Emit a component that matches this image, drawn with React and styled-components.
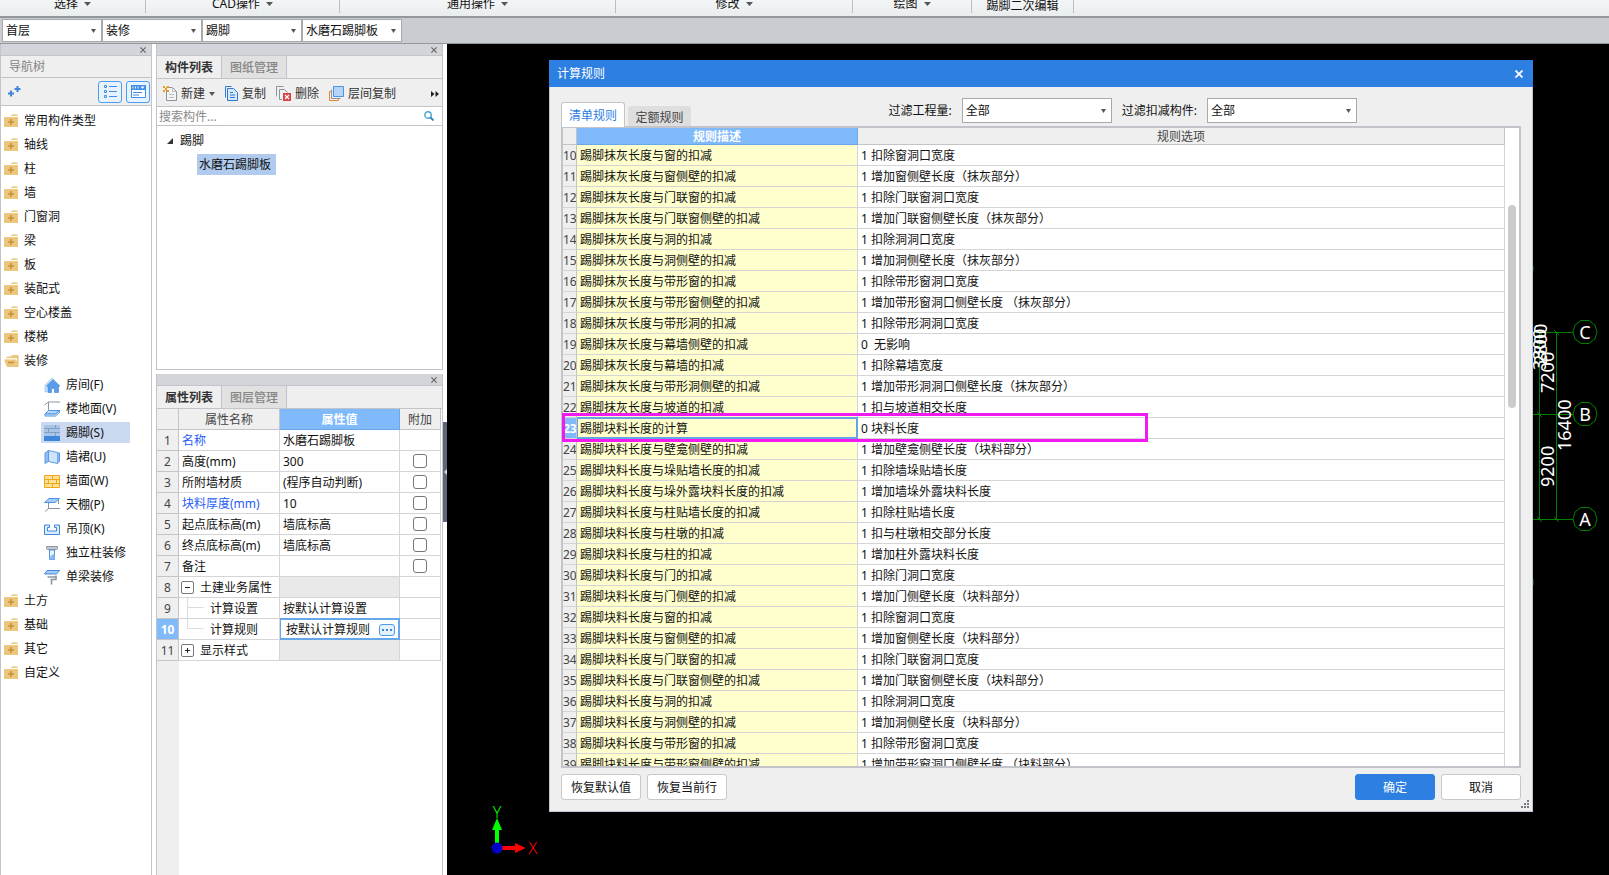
import React from "react";
import styled, { createGlobalStyle, css } from "styled-components";

const GlobalStyle = createGlobalStyle`
  *, *::before, *::after { box-sizing: border-box; }
  html, body, #root { height: 100%; }
  body {
    margin: 0;
    overflow: hidden;
    background: #fff;
    color: #111;
    font: 12px/20px "Noto Sans", "Noto Sans CJK SC", sans-serif;
  }
  button, input, select { font: inherit; color: inherit; margin: 0; }
  button { padding: 0; border: 0; background: none; white-space: nowrap; }
  svg { display: block; flex: none; }
  ul { list-style: none; margin: 0; padding: 0; }
`;

const line = "#c3c4c9";
const cellLine = "#d5d5d5";

const Shell = styled.div`
  height: 100vh;
  display: flex;
  flex-direction: column;
`;

/* ---------- ribbon ---------- */

const Ribbon = styled.nav`
  display: flex;
  flex: none;
  height: 18px;
  overflow: hidden;
  background: linear-gradient(#f3f6f7, #e9edee);
  border-bottom: 2px solid #93979c;
`;

const RibbonGroup = styled.div`
  display: flex;
  justify-content: center;
  align-items: flex-end;
  width: ${(p) => p.$width}px;
  height: 13px;
  padding-bottom: ${(p) => (p.$low ? 1 : 3)}px;
  border-right: 1px solid #bcbfc2;
`;

const RibbonButton = styled.button`
  display: flex;
  align-items: center;
  gap: 6px;
  height: 12px;
  line-height: 12px;
`;

/* ---------- combo boxes ---------- */

const ComboBar = styled.div`
  display: flex;
  flex: none;
  height: 26px;
  padding: 1px 2px;
  background: #c9ccd1;
  border-bottom: 1px solid #94979c;
`;

const ComboBox = styled.span`
  position: relative;
  display: inline-block;
  width: ${(p) => p.$width}px;
  height: ${(p) => p.$height}px;

  select {
    appearance: none;
    display: block;
    width: 100%;
    height: 100%;
    padding: 0 20px 0 3px;
    border: 1px solid #a9a9a9;
    border-radius: 0;
    background: #fff;
  }
  svg {
    position: absolute;
    right: 6px;
    top: 50%;
    margin-top: -2px;
    pointer-events: none;
  }
`;

/* ---------- docked panels ---------- */

const Workspace = styled.div`
  display: flex;
  flex: 1;
  min-height: 0;
`;

const NavPanel = styled.aside`
  display: flex;
  flex-direction: column;
  flex: none;
  width: 152px;
  border: solid ${line};
  border-width: 0 1px;
  background: #fff;
`;

const MiddleColumn = styled.div`
  display: flex;
  flex-direction: column;
  flex: none;
  gap: 4px;
  width: 287px;
  margin-left: 4px;
`;

const DockPanel = styled.section`
  display: flex;
  flex-direction: column;
  flex: ${(p) => (p.$fill ? "1" : "none")};
  min-height: 0;
  border: solid ${line};
  border-width: ${(p) => (p.$fill ? "0 1px" : "0 1px 1px")};
`;

const DockBar = styled.div`
  display: flex;
  justify-content: flex-end;
  align-items: center;
  flex: none;
  height: 12px;
  padding-right: 5px;
  background: #d4d5da;
  border-bottom: 1px solid ${line};
`;

const NavTitle = styled.h2`
  flex: none;
  height: 22px;
  margin: 0;
  padding-left: 8px;
  background: #efefef;
  border-bottom: 1px solid ${line};
  color: #848484;
  font-size: 12px;
  line-height: 21px;
  font-weight: 400;
`;

const NavTools = styled.div`
  display: flex;
  align-items: center;
  gap: 4px;
  flex: none;
  height: 28px;
  padding: 0 1px 0 7px;
  background: #efefef;
  border-bottom: 1px solid ${line};
`;

const AddButton = styled.button`
  margin-right: auto;
`;

const ViewToggle = styled.button`
  display: grid;
  place-items: center;
  width: 24px;
  height: 22px;
  border: 1px solid #4a9ff5;
  border-radius: 3px;
  background: #e8f3fe;
`;

const NavList = styled.ul`
  padding-top: 3px;
`;

const NavRow = styled.button`
  display: flex;
  align-items: center;
  gap: 5px;
  width: 100%;
  height: 24px;
  padding-left: 3px;
`;

const ChildRow = styled.li`
  padding: 1px 0 2px 40px;
`;

const ChildButton = styled.button`
  display: flex;
  align-items: center;
  gap: 6px;
  width: 89px;
  height: 21px;
  padding-left: 3px;
  background: ${(p) => (p.$active ? "#cad9f0" : "none")};
`;

const TabStrip = styled.div`
  display: flex;
  flex: none;
  height: 23px;
  background: #efefef;
  border-bottom: 1px solid ${line};
`;

const DockTab = styled.button`
  width: 65px;
  padding-top: 2px;
  border: solid ${line};
  border-width: 0 1px 0 0;
  background: ${(p) => (p.$active ? "#efefef" : "#e1e1e1")};
  color: ${(p) => (p.$active ? "#333" : "#868686")};
  font-weight: ${(p) => (p.$active ? 700 : 500)};
`;

const ListTools = styled.div`
  display: flex;
  align-items: center;
  flex: none;
  gap: 10px;
  height: 28px;
  padding: 2px 3px 0 6px;
  background: #efefef;
  border-bottom: 1px solid ${line};
`;

const ToolButton = styled.button`
  display: flex;
  align-items: center;
  gap: 4px;
  color: #333;
`;

const MoreButton = styled.button`
  margin-left: auto;
`;

const SearchBox = styled.label`
  display: flex;
  align-items: center;
  flex: none;
  height: 19px;
  padding: 0 8px 0 2px;
  border-bottom: 1px solid ${line};

  input {
    flex: 1;
    min-width: 0;
    height: 18px;
    padding: 2px 0 0;
    border: 0;
    outline: 0;
    background: none;
  }
  input::placeholder { color: #8a8a8a; opacity: 1; }
`;

const ComponentTree = styled.ul`
  height: 243px;
  padding-top: 5px;
`;

const TreeRoot = styled.button`
  display: flex;
  align-items: center;
  gap: 7px;
  height: 20px;
  padding-left: 10px;
`;

const TreeLeaf = styled.button`
  height: 21px;
  margin: 3px 0 0 40px;
  padding: 0 5px 0 2px;
  background: #b0cbee;
`;

/* ---------- property table ---------- */

const PropTable = styled.table`
  flex: none;
  width: 284px;
  table-layout: fixed;
  border-collapse: separate;
  border-spacing: 0;

  th, td {
    height: 21px;
    padding: 2px 0 0;
    border: solid ${cellLine};
    border-width: 0 1px 1px 0;
    text-align: left;
    font-weight: 400;
    line-height: 18px;
    white-space: nowrap;
  }
  thead th {
    background: #efefef;
    border-color: ${line};
    color: #444;
    text-align: center;
  }
  thead th.current {
    background: #80bafb;
    border-color: #6aa8ea;
    color: #fff;
    font-weight: 700;
  }
`;

const PropNumber = styled.th`
  && {
    background: ${(p) => (p.$active ? "#80bafb" : "#efefef")};
    border-color: ${line};
    color: ${(p) => (p.$active ? "#fff" : "#444")};
    font-weight: ${(p) => (p.$active ? 700 : 400)};
    text-align: center;
  }
`;

const NameCell = styled.td`
  && { padding: 0; }
`;

const PropName = styled.div`
  display: flex;
  align-items: center;
  height: 20px;
  padding-left: 3px;
  color: ${(p) => (p.$accent ? "#1f5cf5" : "#111")};
`;

const NameText = styled.span`
  padding-top: 2px;
`;

const Expander = styled.button`
  display: grid;
  place-items: center;
  width: 13px;
  height: 13px;
  margin: 0 6px 0 -1px;
  border: 1px solid #777;
  border-radius: 2px;
  background: #fff;
`;

const PropValue = styled.td`
  && {
    padding-left: 3px;
    background: ${(p) => (p.$blank ? "#e9e9e9" : "#fff")};
    ${(p) => p.$active && css`
      padding: 2px 4px 0 6px;
      border-color: #66a6ea;
      box-shadow: inset 1px 1px #66a6ea, inset -1px -1px #66a6ea, 0 -1px #66a6ea;
    `}
  }
`;

const ValueEditor = styled.div`
  display: flex;
  align-items: center;
  justify-content: space-between;
`;

const EllipsisButton = styled.button`
  display: grid;
  place-items: center;
  width: 16px;
  height: 12px;
  border: 1px solid #4f9ae8;
  border-radius: 3px;
  background: #e3f0fd;
`;

const TickCell = styled.td`
  && { padding: 0; }
`;

const Tick = styled.input`
  appearance: none;
  display: block;
  width: 14px;
  height: 14px;
  margin: 0 auto;
  border: 1px solid #777;
  border-radius: 3px;
  background: #fff;
`;

const NumberGutter = styled.div`
  flex: 1;
  width: 22px;
  background: #efefef;
`;

const Splitter = styled.div`
  flex: none;
  width: 4px;
  padding-top: 378px;
`;

const CollapseHandle = styled.button`
  display: grid;
  place-items: center;
  width: 4px;
  height: 100px;
  background: #5d6878;
`;

/* ---------- drawing canvas ---------- */

const Canvas = styled.main`
  position: relative;
  flex: 1;
  min-width: 0;
  overflow: hidden;
  background: #000;
`;

const GridAxes = styled.svg`
  position: absolute;
  top: 0;
  right: 0;
`;

const OriginMark = styled.svg`
  position: absolute;
  left: 34px;
  bottom: 17px;
`;

/* ---------- dialog ---------- */

const Dialog = styled.section`
  position: absolute;
  inset: 16px 76px 63px 102px;
  display: flex;
  flex-direction: column;
  background: #efefef;
`;

const DialogTitle = styled.header`
  display: flex;
  align-items: center;
  justify-content: space-between;
  flex: none;
  height: 27px;
  padding: 0 10px 0 8px;
  background: #2d80e2;
  color: #fff;

  h1 { margin: 0; font-size: 12px; font-weight: 400; }
`;

const DialogBody = styled.div`
  display: flex;
  flex-direction: column;
  flex: 1;
  min-height: 0;
  padding: 0 11px 11px;
  border: solid #bfc6d4;
  border-width: 0 1px 1px;
`;

const DialogHead = styled.div`
  display: flex;
  align-items: flex-end;
  flex: none;
  gap: 3px;
  height: 39px;
`;

const RuleTab = styled.button`
  position: relative;
  z-index: 1;
  width: ${(p) => (p.$active ? 64 : 63)}px;
  padding-top: 2px;
  border-radius: 3px 3px 0 0;
  ${(p) => p.$active
    ? css`
        height: 25px;
        margin-bottom: -1px;
        border: 1px solid ${line};
        border-bottom: 0;
        background: #fff;
        color: #2d80e2;
      `
    : css`
        height: 20px;
        background: #dedede;
        color: #444;
      `}
`;

const Filters = styled.div`
  display: flex;
  gap: 10px;
  margin: 0 164px 3px auto;

  label { display: flex; align-items: center; gap: 10px; }
`;

const GridFrame = styled.div`
  position: relative;
  display: flex;
  flex: 1;
  min-height: 0;
  border: 2px solid ${line};
  background: #fff;
`;

const GridView = styled.div`
  flex: 1;
  overflow: hidden;
`;

const ScrollTrack = styled.div`
  flex: none;
  width: 14px;
  padding: 77px 3px 0;
`;

const ScrollThumb = styled.div`
  height: 203px;
  border-radius: 4px;
  background: #cbcbcb;
`;

const RuleTable = styled.table`
  width: 100%;
  table-layout: fixed;
  border-collapse: separate;
  border-spacing: 0;

  th, td {
    height: 21px;
    padding: 2px 0 0 3px;
    border: solid ${cellLine};
    border-width: 0 1px 1px 0;
    text-align: left;
    font-weight: 400;
    line-height: 18px;
    white-space: pre;
  }
  thead th {
    height: 17px;
    padding: 2px 0 0;
    line-height: 14px;
    background: #efefef;
    border-color: ${line};
    color: #444;
    text-align: center;
  }
  thead th.current {
    background: #80bafb;
    border-color: #6aa8ea;
    color: #fff;
    font-weight: 700;
  }
`;

const RuleNumber = styled.th`
  && {
    padding: 2px 0 0;
    overflow: hidden;
    background: ${(p) => (p.$active ? "#80bafb" : "#efefef")};
    border-right-color: ${line};
    color: ${(p) => (p.$active ? "#fff" : "#444")};
    font-weight: ${(p) => (p.$active ? 700 : 400)};
  }
`;

const RuleName = styled.td`
  && {
    background: #ffffcd;
    ${(p) => p.$active && css`
      border-color: #66a4e4;
      box-shadow: inset 1px 1px #66a4e4, inset -1px -1px #66a4e4, 0 -1px #66a4e4;
    `}
  }
`;

const Highlight = styled.div`
  position: absolute;
  left: -1px;
  top: 285px;
  width: 586px;
  height: 29px;
  border: 3px solid #f21af0;
  pointer-events: none;
`;

const DialogFooter = styled.footer`
  display: flex;
  flex: none;
  gap: 6px;
  padding-top: 6px;
`;

const DialogButton = styled.button`
  width: 80px;
  height: 26px;
  padding-top: 2px;
  margin-left: ${(p) => (p.$pushed ? "auto" : "0")};
  border: 1px solid ${(p) => (p.$primary ? "#2d80e2" : "#c8c8c8")};
  border-radius: 3px;
  background: ${(p) => (p.$primary ? "#2d80e2" : "#fff")};
  color: ${(p) => (p.$primary ? "#fff" : "#111")};
`;

const Grip = styled.svg`
  position: absolute;
  right: 4px;
  bottom: 4px;
`;

/* ---------- icons ---------- */

const Caret = ({ size = 7, color = "#555" }) => (
  <svg width={size} height="4" viewBox="0 0 8 4" preserveAspectRatio="none" fill={color}><path d="M0 0h8L4 4z" /></svg>
);

const Cross = ({ size = 6, color = "#666", weight = 1.5 }) => (
  <svg width={size} height={size} viewBox="0 0 8 8" stroke={color} strokeWidth={weight}><path d="M.5.5l7 7M7.500.5l-7 7" /></svg>
);

const Folder = () => (
  <svg width="15" height="14" viewBox="0 0 15 14">
    <path d="M7 1.500l1-1h5l1 1.500H7zM0 3h14v9.500q0 .5-.5.5H.5q-.5 0-.5-.5z" fill="#ecc67c" />
    <path d="M7 5v6M4 8h6" stroke="#c4933a" strokeWidth="1.600" />
  </svg>
);

const FolderOpen = () => (
  <svg width="15" height="14" viewBox="0 0 15 14">
    <path d="M2 3.500L8 1.500h6.500V13H3z" fill="#f6e3b8" />
    <path d="M2 3l5-.5 1.500-1.500H14.500V13H12z" fill="#ecc67c" />
    <path d="M2.500 4H13v3H3z" fill="#fdf5e2" />
    <path d="M0 5.500h12L14 13H3z" fill="#ecc67c" />
    <path d="M4 8.500h6" stroke="#c4933a" strokeWidth="1.600" />
  </svg>
);

const childIcons = {
  room: (
    <g>
      <path d="M1 8l7-7 2 2-7 7v5H1z" fill="#cfe4fb" stroke="#8dbdf0" strokeWidth=".6" />
      <path d="M9 2.500l7 6.500h-1.500v6.500h-4v-4h-3v4H4V9H2.500z" fill="#5b9ceb" stroke="#3c82dc" strokeWidth=".6" />
    </g>
  ),
  floor: (
    <g fill="none">
      <path d="M4.500 9V1L.5 4M4.500 1H16" stroke="#8a95a3" />
      <path d="M4.500 9.500H15.500l-4 3.500H1z" fill="#b9d7f8" stroke="#4d93e0" />
      <path d="M1 13v2h10.500l4-3.500v-2L11.500 13z" fill="#dcebfc" stroke="#4d93e0" />
    </g>
  ),
  skirting: (
    <g>
      <path d="M0 0h16v11H0z" fill="#a9c4e4" />
      <path d="M0 3.500h16M0 7.500h16M4.500 3.500v4M11.500 0v3.500M11.500 7.500V11" stroke="#7f9fc4" />
      <path d="M0 11h16v5H0z" fill="#3c86dc" />
    </g>
  ),
  dado: (
    <g stroke="#5a9ae6">
      <path d="M4.500 1.500l9 2v11l-9-2z" fill="#cfe3fa" />
      <path d="M1 4l3.500-2.500v11L1 14.500zM13.500 3.500l2 .5v8.500l-2 2" fill="#8fbcf1" />
    </g>
  ),
  wall: (
    <g>
      <path d="M.5 2.500h15v12H.5z" fill="#fde39a" stroke="#f2a516" />
      <path d="M0 6.500h16M0 10.500h16M8.500 2.500v4M4.500 6.500v4M12.500 6.500v4M8.500 10.500v4" stroke="#f2a516" />
    </g>
  ),
  ceiling: (
    <g>
      <path d="M5 1.500h10.500l-4.500 4H.5z" fill="#a5cbf6" stroke="#4d93e0" />
      <path d="M4.500 6v6M4.500 11.500H16M14.500 3v4M4.500 11.500L1 14.500" fill="none" stroke="#8a95a3" />
    </g>
  ),
  suspended: <path d="M.5 4h5v2.500h-2v3.500h9V6.500h-2V4h5v9.500H.5z" fill="#dcebfc" stroke="#3f88de" />,
  column: (
    <g>
      <path d="M2.500 1.500h11v2l-1 1h-9l-1-1z" fill="#c3c9d0" stroke="#8a95a3" />
      <path d="M5.500 5h5v9.500h-5z" fill="#eef5fd" stroke="#4d93e0" />
      <path d="M5.500 12l5-4v6.500h-5z" fill="#8dbaf0" />
    </g>
  ),
  beam: (
    <g>
      <path d="M3 1.500h12.500l-3 3.500H.5z" fill="#a5cbf6" stroke="#3f88de" />
      <path d="M3.500 8h8.500V6.500M12 8v2.500H7.500v5" fill="none" stroke="#8a95a3" strokeWidth="1.600" />
    </g>
  ),
};

const ChildIcon = ({ name }) => (
  <svg width="16" height="16" viewBox="0 0 16 16">{childIcons[name]}</svg>
);

const NewIcon = () => (
  <svg width="14" height="15" viewBox="0 0 14 15">
    <path d="M3.500 1.500h6l4 4v9h-10z" fill="#f4f4f4" stroke="#8b949e" />
    <path d="M9.500 1.500v4h4M6 8.500h5M6 11.500h5" fill="none" stroke="#b8bec5" />
    <path d="M0 0h2v2H0zM4 0h2v2H4zM2 2h2v2H2zM0 4h2v2H0zM4 4h2v2H4z" fill="#f09a1c" />
  </svg>
);

const CopyIcon = () => (
  <svg width="13" height="15" viewBox="0 0 13 15">
    <path d="M.5 11.500V.5h6" fill="none" stroke="#2f79d3" />
    <path d="M2.500 2.500h6l4 4v8h-10z" fill="#d5e7fb" stroke="#2f79d3" />
    <path d="M5 6.500h3M5 9h5M5 11.500h5" stroke="#2f79d3" />
  </svg>
);

const DeleteIcon = () => (
  <svg width="15" height="15" viewBox="0 0 15 15">
    <path d="M.5 10.500V.5h7M3.500 13.500v-10h5l3 3M6 13.500H3.500" fill="none" stroke="#8b949e" />
    <path d="M7 7h8v8H7z" fill="#d64545" />
    <path d="M9 9l4 4M13 9l-4 4" stroke="#fff" strokeWidth="1.200" />
  </svg>
);

const FloorCopyIcon = () => (
  <svg width="15" height="15" viewBox="0 0 15 15">
    <path d="M.5 5.500v9h9v-2M.5 5.500h2" fill="none" stroke="#e8872a" />
    <path d="M2.500 3.500v9h9" fill="none" stroke="#8b949e" />
    <path d="M4.500.5h10v10h-10z" fill="#b4d4fa" stroke="#4d93e0" />
  </svg>
);

const SearchIcon = () => (
  <svg width="10" height="10" viewBox="0 0 10 10" fill="none">
    <circle cx="4" cy="4" r="3.200" stroke="#4aa3d4" strokeWidth="1.400" />
    <path d="M6.500 6.500l3 3" stroke="#2d7fb5" strokeWidth="1.800" />
  </svg>
);

const ListIcon = () => (
  <svg width="13" height="13" viewBox="0 0 13 13" fill="none" stroke="#3d8fe8">
    <path d="M.5.5h2v2h-2zM.5 5.500h2v2h-2zM.5 10.500h2v2h-2zM5 1.500h8M5 6.500h8M5 11.500h8" />
  </svg>
);

const WindowIcon = () => (
  <svg width="15" height="13" viewBox="0 0 15 13">
    <path d="M.5.5h14v12H.5z" fill="#fff" stroke="#3d8fe8" />
    <path d="M0 0h15v5H0z" fill="#3d8fe8" />
    <path d="M2 1.500v2M4.500 1.500v2M7 1.500v2" stroke="#fff" />
    <path d="M9.500 1.500h4l-2 2.500z" fill="#fff" />
    <path d="M2 7.500h9M2 10h6" stroke="#3d8fe8" />
  </svg>
);

const PlusPair = () => (
  <svg width="13" height="11" viewBox="0 0 13 11" stroke="#3f86dc" strokeWidth="2">
    <path d="M0 7.500h6M3 4.500v6M6.500 3h6M9.500 0v6" />
  </svg>
);

const Branch = ({ last }) => (
  <svg width="28" height="20" viewBox="0 0 28 20" stroke="#dcdcdc">
    <path d={last ? "M5.500 0v10M5 9.500h16.500" : "M5.500 0v20M5 9.500h16.500"} />
  </svg>
);

/* ---------- data ---------- */

const ribbonGroups = [
  ["选择", 146], ["CAD操作", 194], ["通用操作", 276], ["修改", 237], ["绘图", 119], ["踢脚二次编辑", 102, true],
];

const combos = [["楼层", "首层"], ["构件大类", "装修"], ["构件类型", "踢脚"], ["构件", "水磨石踢脚板"]];

const navBefore = ["常用构件类型", "轴线", "柱", "墙", "门窗洞", "梁", "板", "装配式", "空心楼盖", "楼梯"];
const navChildren = [
  ["房间(F)", "room"], ["楼地面(V)", "floor"], ["踢脚(S)", "skirting"], ["墙裙(U)", "dado"], ["墙面(W)", "wall"],
  ["天棚(P)", "ceiling"], ["吊顶(K)", "suspended"], ["独立柱装修", "column"], ["单梁装修", "beam"],
];
const navAfter = ["土方", "基础", "其它", "自定义"];

const properties = [
  { name: "名称", value: "水磨石踢脚板", accent: true },
  { name: "高度(mm)", value: "300", tick: true },
  { name: "所附墙材质", value: "(程序自动判断)", tick: true },
  { name: "块料厚度(mm)", value: "10", tick: true, accent: true },
  { name: "起点底标高(m)", value: "墙底标高", tick: true },
  { name: "终点底标高(m)", value: "墙底标高", tick: true },
  { name: "备注", value: "", tick: true },
  { name: "土建业务属性", group: "open" },
  { name: "计算设置", value: "按默认计算设置", branch: "mid" },
  { name: "计算规则", value: "按默认计算规则", branch: "last", active: true },
  { name: "显示样式", group: "closed" },
];

const rules = [
  ["踢脚抹灰长度与窗的扣减", "1 扣除窗洞口宽度"],
  ["踢脚抹灰长度与窗侧壁的扣减", "1 增加窗侧壁长度（抹灰部分）"],
  ["踢脚抹灰长度与门联窗的扣减", "1 扣除门联窗洞口宽度"],
  ["踢脚抹灰长度与门联窗侧壁的扣减", "1 增加门联窗侧壁长度（抹灰部分）"],
  ["踢脚抹灰长度与洞的扣减", "1 扣除洞洞口宽度"],
  ["踢脚抹灰长度与洞侧壁的扣减", "1 增加洞侧壁长度（抹灰部分）"],
  ["踢脚抹灰长度与带形窗的扣减", "1 扣除带形窗洞口宽度"],
  ["踢脚抹灰长度与带形窗侧壁的扣减", "1 增加带形窗洞口侧壁长度 （抹灰部分）"],
  ["踢脚抹灰长度与带形洞的扣减", "1 扣除带形洞洞口宽度"],
  ["踢脚抹灰长度与幕墙侧壁的扣减", "0  无影响"],
  ["踢脚抹灰长度与幕墙的扣减", "1 扣除幕墙宽度"],
  ["踢脚抹灰长度与带形洞侧壁的扣减", "1 增加带形洞洞口侧壁长度（抹灰部分）"],
  ["踢脚抹灰长度与坡道的扣减", "1 扣与坡道相交长度"],
  ["踢脚块料长度的计算", "0 块料长度"],
  ["踢脚块料长度与壁龛侧壁的扣减", "1 增加壁龛侧壁长度（块料部分）"],
  ["踢脚块料长度与垛贴墙长度的扣减", "1 扣除墙垛贴墙长度"],
  ["踢脚块料长度与垛外露块料长度的扣减", "1 增加墙垛外露块料长度"],
  ["踢脚块料长度与柱贴墙长度的扣减", "1 扣除柱贴墙长度"],
  ["踢脚块料长度与柱墩的扣减", "1 扣与柱墩相交部分长度"],
  ["踢脚块料长度与柱的扣减", "1 增加柱外露块料长度"],
  ["踢脚块料长度与门的扣减", "1 扣除门洞口宽度"],
  ["踢脚块料长度与门侧壁的扣减", "1 增加门侧壁长度（块料部分）"],
  ["踢脚块料长度与窗的扣减", "1 扣除窗洞口宽度"],
  ["踢脚块料长度与窗侧壁的扣减", "1 增加窗侧壁长度（块料部分）"],
  ["踢脚块料长度与门联窗的扣减", "1 扣除门联窗洞口宽度"],
  ["踢脚块料长度与门联窗侧壁的扣减", "1 增加门联窗侧壁长度（块料部分）"],
  ["踢脚块料长度与洞的扣减", "1 扣除洞洞口宽度"],
  ["踢脚块料长度与洞侧壁的扣减", "1 增加洞侧壁长度（块料部分）"],
  ["踢脚块料长度与带形窗的扣减", "1 扣除带形窗洞口宽度"],
  ["踢脚块料长度与带形窗侧壁的扣减", "1 增加带形窗洞口侧壁长度 （块料部分）"],
];
const firstRule = 10;
const currentRule = 23;

/* ---------- parts ---------- */

const Combo = ({ id, label, value, width, height }) => (
  <ComboBox $width={width} $height={height}>
    <select id={id} aria-label={label} defaultValue={value}>
      <option>{value}</option>
    </select>
    <Caret size={5} />
  </ComboBox>
);

const DockHeader = ({ title }) => (
  <DockBar>
    <button type="button" aria-label={`关闭${title}`}><Cross /></button>
  </DockBar>
);

const NavItem = ({ label, open }) => (
  <li>
    <NavRow type="button">{open ? <FolderOpen /> : <Folder />}{label}</NavRow>
  </li>
);

const PropertyRow = ({ item, number }) => (
  <tr>
    <PropNumber scope="row" $active={item.active}>{number}</PropNumber>
    <NameCell>
      <PropName $accent={item.accent}>
        {item.group && (
          <Expander type="button" aria-label={`展开或收起${item.name}`}>
            <svg width="7" height="7" viewBox="0 0 7 7" stroke="#222">
              <path d={item.group === "open" ? "M1 3.500h5" : "M1 3.500h5M3.500 1v5"} />
            </svg>
          </Expander>
        )}
        {item.branch && <Branch last={item.branch === "last"} />}
        <NameText>{item.name}</NameText>
      </PropName>
    </NameCell>
    <PropValue $blank={!!item.group} $active={item.active}>
      {item.active ? (
        <ValueEditor>
          {item.value}
          <EllipsisButton type="button" aria-label="编辑计算规则">
            <svg width="10" height="2" viewBox="0 0 10 2" fill="#3a86dc"><path d="M0 0h2v2H0zM4 0h2v2H4zM8 0h2v2H8z" /></svg>
          </EllipsisButton>
        </ValueEditor>
      ) : item.value}
    </PropValue>
    <TickCell>{item.tick && <Tick type="checkbox" aria-label={`附加${item.name}`} />}</TickCell>
  </tr>
);

const Drawing = () => (
  <>
    <GridAxes width="76" height="600" viewBox="0 0 76 600" fontSize="18" fill="#fff">
      <g stroke="#008000" fill="none">
        <path d="M0 288.500h40M0 370.500h40M0 475.500h40M6.500 288v188M23.500 288v188" />
        <path d="M4 286l5 5M21 286l5 5M4 368l5 5M21 473l5 5M4 473l5 5M0 222v5M0 535v6" />
        {[288, 370, 475].map((y) => (
          <path key={y} transform={`translate(52 ${y})`} d="M12 0L10 7 4 11.500h-8L-10 7-12 0-10-7-4-11.500h8L10-7z" />
        ))}
      </g>
      <text x="52" y="295" textAnchor="middle">C</text>
      <text x="52" y="377" textAnchor="middle">B</text>
      <text x="52" y="482" textAnchor="middle">A</text>
      <text transform="translate(21 349) rotate(-90)">7200</text>
      <text transform="translate(21 443) rotate(-90)">9200</text>
      <text transform="translate(38 407) rotate(-90)">16400</text>
      <text transform="translate(13 326) rotate(-90)">3300</text>
      <text transform="translate(14 321) rotate(-90)">2800</text>
    </GridAxes>
    <OriginMark width="58" height="56" viewBox="0 0 58 56" fontSize="16" fontWeight="300">
      <path d="M14 42V28h-3l5-12 5 12h-3v14z" fill="#0f0" />
      <path d="M20 44h14v-3l11 5-11 5v-3H20z" fill="#f00" />
      <circle cx="16" cy="46" r="5.500" fill="#0000c8" />
      <text x="16" y="16" textAnchor="middle" fill="#0f0">Y</text>
      <text x="52" y="52" textAnchor="middle" fill="#f00">X</text>
    </OriginMark>
  </>
);

const RulesDialog = () => (
  <Dialog role="dialog" aria-labelledby="rules-title">
    <DialogTitle>
      <h1 id="rules-title">计算规则</h1>
      <button type="button" aria-label="关闭"><Cross size={8} color="#fff" weight={1.8} /></button>
    </DialogTitle>
    <DialogBody>
      <DialogHead>
        <RuleTab type="button" $active>清单规则</RuleTab>
        <RuleTab type="button">定额规则</RuleTab>
        <Filters>
          <label htmlFor="filter-quantity">过滤工程量:<Combo id="filter-quantity" value="全部" width={150} height={25} /></label>
          <label htmlFor="filter-deduct">过滤扣减构件:<Combo id="filter-deduct" value="全部" width={150} height={25} /></label>
        </Filters>
      </DialogHead>
      <GridFrame>
        <GridView>
          <RuleTable>
            <colgroup><col width="14" /><col width="281" /><col /></colgroup>
            <thead>
              <tr><th aria-label="行号" /><th className="current">规则描述</th><th>规则选项</th></tr>
            </thead>
            <tbody>
              {rules.map(([name, option], i) => {
                const number = firstRule + i;
                const active = number === currentRule;
                return (
                  <tr key={number}>
                    <RuleNumber scope="row" $active={active}>{number}</RuleNumber>
                    <RuleName $active={active}>{name}</RuleName>
                    <td>{option}</td>
                  </tr>
                );
              })}
            </tbody>
          </RuleTable>
        </GridView>
        <ScrollTrack><ScrollThumb /></ScrollTrack>
        <Highlight />
      </GridFrame>
      <DialogFooter>
        <DialogButton type="button">恢复默认值</DialogButton>
        <DialogButton type="button">恢复当前行</DialogButton>
        <DialogButton type="button" $primary $pushed>确定</DialogButton>
        <DialogButton type="button">取消</DialogButton>
      </DialogFooter>
    </DialogBody>
    <Grip width="8" height="8" viewBox="0 0 8 8" fill="#777b82">
      <path d="M6 0h2v2H6zM3 3h2v2H3zM6 3h2v2H6zM0 6h2v2H0zM3 6h2v2H3zM6 6h2v2H6z" />
    </Grip>
  </Dialog>
);

export default function App() {
  return (
    <Shell>
      <GlobalStyle />
      <Ribbon>
        {ribbonGroups.map(([label, width, low]) => (
          <RibbonGroup key={label} $width={width} $low={low}>
            <RibbonButton type="button">{label}{!low && <Caret />}</RibbonButton>
          </RibbonGroup>
        ))}
      </Ribbon>
      <ComboBar>
        {combos.map(([label, value]) => (
          <Combo key={label} label={label} value={value} width={100} height={23} />
        ))}
      </ComboBar>
      <Workspace>
        <NavPanel>
          <DockHeader title="导航树" />
          <NavTitle>导航树</NavTitle>
          <NavTools>
            <AddButton type="button" aria-label="添加"><PlusPair /></AddButton>
            <ViewToggle type="button" aria-label="列表视图"><ListIcon /></ViewToggle>
            <ViewToggle type="button" aria-label="面板视图"><WindowIcon /></ViewToggle>
          </NavTools>
          <NavList>
            {navBefore.map((label) => <NavItem key={label} label={label} />)}
            <NavItem label="装修" open />
            {navChildren.map(([label, icon]) => (
              <ChildRow key={label}>
                <ChildButton type="button" $active={icon === "skirting"}><ChildIcon name={icon} />{label}</ChildButton>
              </ChildRow>
            ))}
            {navAfter.map((label) => <NavItem key={label} label={label} />)}
          </NavList>
        </NavPanel>
        <MiddleColumn>
          <DockPanel>
            <DockHeader title="构件列表" />
            <TabStrip>
              <DockTab type="button" $active>构件列表</DockTab>
              <DockTab type="button">图纸管理</DockTab>
            </TabStrip>
            <ListTools>
              <ToolButton type="button"><NewIcon />新建<Caret size={6} /></ToolButton>
              <ToolButton type="button"><CopyIcon />复制</ToolButton>
              <ToolButton type="button"><DeleteIcon />删除</ToolButton>
              <ToolButton type="button"><FloorCopyIcon />层间复制</ToolButton>
              <MoreButton type="button" aria-label="更多">
                <svg width="8" height="6" viewBox="0 0 8 6" fill="#222"><path d="M0 0l3.500 3L0 6zM4.500 0L8 3 4.500 6z" /></svg>
              </MoreButton>
            </ListTools>
            <SearchBox>
              <input type="text" aria-label="搜索构件" placeholder="搜索构件..." />
              <SearchIcon />
            </SearchBox>
            <ComponentTree>
              <li>
                <TreeRoot type="button">
                  <svg width="6" height="6" viewBox="0 0 6 6" fill="#333"><path d="M6 0v6H0z" /></svg>
                  踢脚
                </TreeRoot>
                <TreeLeaf type="button">水磨石踢脚板</TreeLeaf>
              </li>
            </ComponentTree>
          </DockPanel>
          <DockPanel $fill>
            <DockHeader title="属性列表" />
            <TabStrip>
              <DockTab type="button" $active>属性列表</DockTab>
              <DockTab type="button">图层管理</DockTab>
            </TabStrip>
            <PropTable>
              <colgroup><col width="22" /><col width="101" /><col width="120" /><col width="41" /></colgroup>
              <thead>
                <tr><th aria-label="行号" /><th>属性名称</th><th className="current">属性值</th><th>附加</th></tr>
              </thead>
              <tbody>
                {properties.map((item, i) => <PropertyRow key={item.name} item={item} number={i + 1} />)}
              </tbody>
            </PropTable>
            <NumberGutter />
          </DockPanel>
        </MiddleColumn>
        <Splitter>
          <CollapseHandle type="button" aria-label="收起面板">
            <svg width="3" height="6" viewBox="0 0 3 6" fill="#d5d9de"><path d="M3 0v6L0 3z" /></svg>
          </CollapseHandle>
        </Splitter>
        <Canvas>
          <Drawing />
          <RulesDialog />
        </Canvas>
      </Workspace>
    </Shell>
  );
}
